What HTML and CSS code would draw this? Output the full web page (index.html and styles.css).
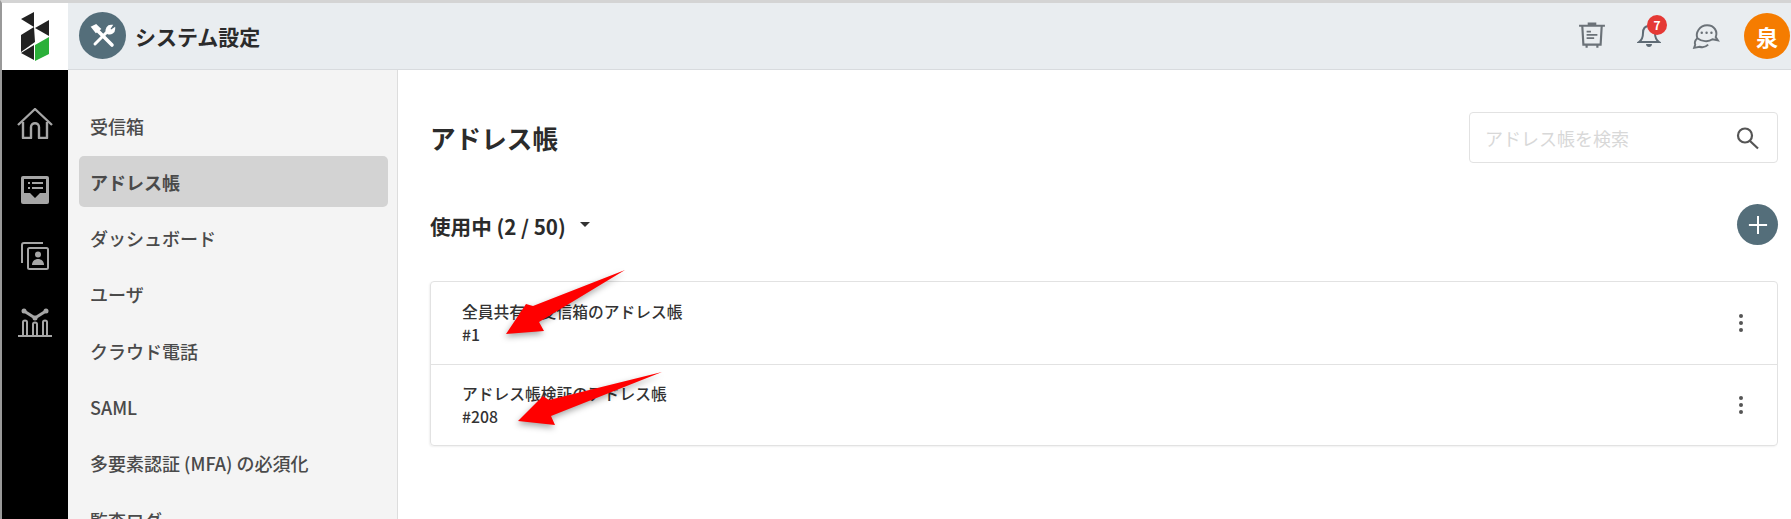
FILE: index.html
```html
<!DOCTYPE html>
<html lang="ja">
<head>
    <meta charset="UTF-8">
    <meta name="viewport" content="width=device-width, initial-scale=1.0">
    <title>システム設定</title>
    <link rel="stylesheet" href="styles.css">
</head>
<body>
    <div class="app">
        <div class="logo">
            <svg width="66" height="66" viewBox="0 0 66 66">
                <path fill="#222" d="M32 9L19 16l13 8zM47 17l-14 8 14 8zM19 32l13-8 1 15-14 10zM19 50l13-8v15z"/>
                <path fill="#2bb03a" d="M47 34l-14 8v16l14-7z"/>
            </svg>
        </div>
        <header class="topbar">
            <div class="app-title">
                <span class="app-icon">
                    <svg width="28" height="28" viewBox="0 0 28 28" fill="none" stroke="#fff" stroke-linecap="round">
                        <path stroke-width="3.600" d="M8 8l15 15"/>
                        <path stroke-width="1.800" d="M3 5l4 5 4-3-4-4z" fill="#fff"/>
                        <path stroke-width="3" d="M19 9L6 22"/>
                        <path stroke-width="2.400" d="M18 10c-1-3 1-6 4-6l-2 3 2 2 3-2c0 3-3 5-6 4z" fill="#fff"/>
                    </svg>
                </span>
                <h1>システム設定</h1>
            </div>
            <div class="topbar-tools">
                <svg class="tool" width="28" height="28" viewBox="0 0 26 26" fill="none" stroke="#6b7278" stroke-width="2">
                    <path d="M1 3.500h24M4 4l1 17h16l1-17M8 21v3M18 21v3M9 1.500h8"/>
                    <path stroke-width="1.600" d="M8 9h4M8 12h10M8 15h7"/>
                </svg>
                <span class="bell">
                    <svg width="24" height="26" viewBox="0 0 24 26" fill="none" stroke="#5f6b75" stroke-width="2">
                        <path d="M12 3c-4 0-6 3-6 7 0 5-1 7-4 9h20c-3-2-4-4-4-9 0-4-2-7-6-7z"/>
                        <path fill="#5f6b75" stroke="none" d="M9 21h6c0 2-1.500 3-3 3s-3-1-3-3z"/>
                    </svg>
                    <span class="badge">7</span>
                </span>
                <svg class="tool" width="28" height="28" viewBox="0 0 26 26" fill="none" stroke="#6b7278" stroke-width="1.800">
                    <path d="M5 15c-2-5 2-12 9-12s10 6 8 11l2 3-5-1c-4 3-10 2-14-1z"/>
                    <path d="M5 15c-2 2-3 4-2 6l-1 3 5-1c3 1 6 0 8-2"/>
                    <path stroke-width="2.200" stroke-linecap="round" d="M9 10h.1M13.500 10h.1M18 10h.1"/>
                </svg>
                <span class="avatar">泉</span>
            </div>
        </header>

        <nav class="rail">
            <a class="rail-item">
                <svg width="36" height="31" viewBox="0 0 36 31" fill="none" stroke="#a6a6a6" stroke-width="2.400" stroke-linejoin="round">
                    <path d="M1 17L18 1l17 16"/>
                    <path d="M6 14v16h8V19c0-5 8-5 8 0v11h8V14"/>
                </svg>
            </a>
            <a class="rail-item">
                <svg width="28" height="28" viewBox="0 0 28 28" fill="none">
                    <path fill="#a6a6a6" d="M2 0h24a2 2 0 0 1 2 2v24a2 2 0 0 1-2 2H2a2 2 0 0 1-2-2V2a2 2 0 0 1 2-2z"/>
                    <path fill="#000" d="M3 3h22v14h-6l-5 5-5-5H3z"/>
                    <path stroke="#a6a6a6" stroke-width="2" d="M7 7h2M11 7h11M7 12h2M11 12h11"/>
                </svg>
            </a>
            <a class="rail-item">
                <svg width="28" height="28" viewBox="0 0 28 28" fill="none" stroke="#a6a6a6" stroke-width="2">
                    <path d="M1 21V3a2 2 0 0 1 2-2h19"/>
                    <rect x="7" y="6" width="20" height="21" rx="1.500"/>
                    <circle cx="17" cy="12.500" r="3" fill="#a6a6a6" stroke="none"/>
                    <path fill="#a6a6a6" stroke="none" d="M11 23c0-8 12-8 12 0z"/>
                </svg>
            </a>
            <a class="rail-item">
                <svg width="34" height="29" viewBox="0 0 34 29" fill="none" stroke="#a6a6a6" stroke-width="2">
                    <path d="M0 28h34"/>
                    <path d="M5 27V14c0-2 4-2 4 0v13M15 27V16c0-2 4-2 4 0v11M25 27V14c0-2 4-2 4 0v13"/>
                    <path stroke-width="3" d="M6 3l11 7L28 3"/>
                    <circle cx="6" cy="3" r="2.500" fill="#a6a6a6" stroke="none"/>
                    <circle cx="17" cy="10" r="2.500" fill="#a6a6a6" stroke="none"/>
                    <circle cx="28" cy="3" r="2.500" fill="#a6a6a6" stroke="none"/>
                </svg>
            </a>
        </nav>

        <aside class="sidebar">
            <a class="menu-item">受信箱</a>
            <a class="menu-item active">アドレス帳</a>
            <a class="menu-item">ダッシュボード</a>
            <a class="menu-item">ユーザ</a>
            <a class="menu-item">クラウド電話</a>
            <a class="menu-item">SAML</a>
            <a class="menu-item">多要素認証 (MFA) の必須化</a>
            <a class="menu-item">監査ログ</a>
        </aside>

        <main class="content">
            <div class="title-row">
                <h2>アドレス帳</h2>
                <div class="search">
                    <span class="placeholder">アドレス帳を検索</span>
                    <svg width="24" height="24" viewBox="0 0 24 24" fill="none" stroke="#555" stroke-width="2.200">
                        <circle cx="10" cy="9.500" r="7"/>
                        <path d="M15 15l8 7.500"/>
                    </svg>
                </div>
            </div>
            <div class="section-row">
                <div class="section-name">使用中 (2 / 50)<span class="caret"></span></div>
                <span class="add-btn">
                    <svg width="20" height="20" viewBox="0 0 22 22" stroke="#fff" stroke-width="2.200"><path d="M11 1v20M1 11h20"/></svg>
                </span>
            </div>
            <div class="book-list">
                <div class="book">
                    <div>
                        <div class="book-name">全員共有の受信箱のアドレス帳</div>
                        <div class="book-id">#1</div>
                    </div>
                    <span class="kebab"><i></i><i></i><i></i></span>
                </div>
                <div class="book">
                    <div>
                        <div class="book-name">アドレス帳検証のアドレス帳</div>
                        <div class="book-id">#208</div>
                    </div>
                    <span class="kebab"><i></i><i></i><i></i></span>
                </div>
            </div>
        </main>

        <!-- red arrows pasted on top of the screenshot -->
        <svg class="arrows" width="1791" height="519" viewBox="0 0 1791 519">
            <path class="arrow" d="M625 270L533 306 526 304 506 334 544 331 539 322z"/>
            <path class="arrow" d="M662 372L549 400 543 396 518 421 555 425 551 416z"/>
        </svg>
    </div>
</body>
</html>
```

FILE: styles.css
```css
* {
    box-sizing: border-box;
}
html, body {
    margin: 0;
    padding: 0;
    height: 100%;
    overflow: hidden;
}
body {
    font-family: "Noto Sans CJK JP", "Noto Sans", sans-serif;
    background-color: #fff;
    color: #333;
}
.app {
    position: relative;
    display: grid;
    grid-template-columns: 66px 330px 1fr;
    grid-template-rows: 67px 1fr;
    height: 519px;
    border-top: 3px solid #d4d4d4;
    border-left: 2px solid #999;
    overflow: hidden;
}
.logo {
    background: #fff;
    height: 66px;
}
.logo svg {
    display: block;
}
.topbar {
    grid-column: 2 / 4;
    display: flex;
    justify-content: space-between;
    align-items: center;
    background: #e9edf0;
    border-bottom: 1px solid #d8dbde;
    padding: 0 1px 1px 11px;
}
.app-title {
    display: flex;
    align-items: center;
    gap: 9px;
}
.app-title h1 {
    margin: 0;
    font-size: 21px;
    font-weight: 700;
    color: #2b2b2b;
}
.app-icon {
    display: flex;
    align-items: center;
    justify-content: center;
    width: 47px;
    height: 47px;
    border-radius: 50%;
    background: #546e7a;
}
.topbar-tools {
    display: flex;
    align-items: center;
}
.topbar-tools .tool {
    display: block;
}
.bell {
    position: relative;
    display: block;
    width: 24px;
    height: 26px;
    margin: 0 31px;
}
.badge {
    position: absolute;
    top: -8px;
    left: 10px;
    width: 20px;
    height: 20px;
    border-radius: 50%;
    background: #e53935;
    color: #fff;
    font-size: 12px;
    font-weight: 700;
    line-height: 20px;
    text-align: center;
}
.avatar {
    display: block;
    width: 46px;
    height: 46px;
    margin-left: 24px;
    border-radius: 50%;
    background: #f57c00;
    color: #fff;
    font-size: 22px;
    font-weight: 700;
    line-height: 46px;
    text-align: center;
}
.rail {
    background: #000;
    padding-top: 20px;
}
.rail-item {
    display: flex;
    align-items: center;
    justify-content: center;
    height: 66.500px;
}
.sidebar {
    background: #f4f4f4;
    border-right: 1px solid #ddd;
    padding: 30px 9px 0 11px;
    overflow: hidden;
}
.menu-item {
    display: flex;
    align-items: center;
    height: 51px;
    margin-bottom: 5.300px;
    padding-left: 11px;
    border-radius: 5px;
    font-size: 18px;
    font-weight: 500;
    color: #4a4a4a;
    white-space: nowrap;
}
.menu-item.active {
    background: #d3d3d3;
    font-weight: 700;
}
.content {
    padding: 42px 13px 0 32px;
}
.title-row {
    display: flex;
    justify-content: space-between;
    align-items: center;
    height: 51px;
}
.title-row h2 {
    margin: 0;
    font-size: 25.600px;
    font-weight: 700;
    color: #2b2b2b;
}
.search {
    display: flex;
    justify-content: space-between;
    align-items: center;
    width: 309px;
    height: 51px;
    padding: 0 18px 0 15px;
    border: 1px solid #e2e2e2;
    border-radius: 4px;
}
.placeholder {
    font-size: 18px;
    color: #d8d8d8;
}
.section-row {
    display: flex;
    justify-content: space-between;
    align-items: center;
    height: 41px;
    margin-top: 41px;
}
.section-name {
    display: flex;
    align-items: center;
    padding-top: 3px;
    font-size: 20.600px;
    font-weight: 700;
    color: #2b2b2b;
}
.caret {
    width: 0;
    height: 0;
    margin-left: 14px;
    margin-bottom: 4px;
    border-left: 5px solid transparent;
    border-right: 5px solid transparent;
    border-top: 5px solid #333;
}
.add-btn {
    display: flex;
    align-items: center;
    justify-content: center;
    width: 41px;
    height: 41px;
    border-radius: 50%;
    background: #546e7a;
}
.book-list {
    margin-top: 36px;
    border: 1px solid #e2e2e2;
    border-radius: 4px;
    box-shadow: -1px 1px 2px rgba(0, 0, 0, 0.06);
}
.book {
    display: flex;
    justify-content: space-between;
    align-items: center;
    height: 82px;
    padding: 0 34px 0 31px;
}
.book + .book {
    height: 81px;
    border-top: 1px solid #e2e2e2;
}
.book-name, .book-id {
    font-size: 15.750px;
    font-weight: 500;
    line-height: 23px;
    color: #333;
}
.kebab {
    display: flex;
    flex-direction: column;
    gap: 3px;
}
.kebab i {
    display: block;
    width: 4px;
    height: 4px;
    border-radius: 50%;
    background: #555;
}
.arrows {
    position: absolute;
    top: -3px;
    left: -2px;
    pointer-events: none;
    filter: drop-shadow(-1px 3px 3px rgba(0, 0, 0, 0.35));
}
.arrow {
    fill: #f00;
}
```
